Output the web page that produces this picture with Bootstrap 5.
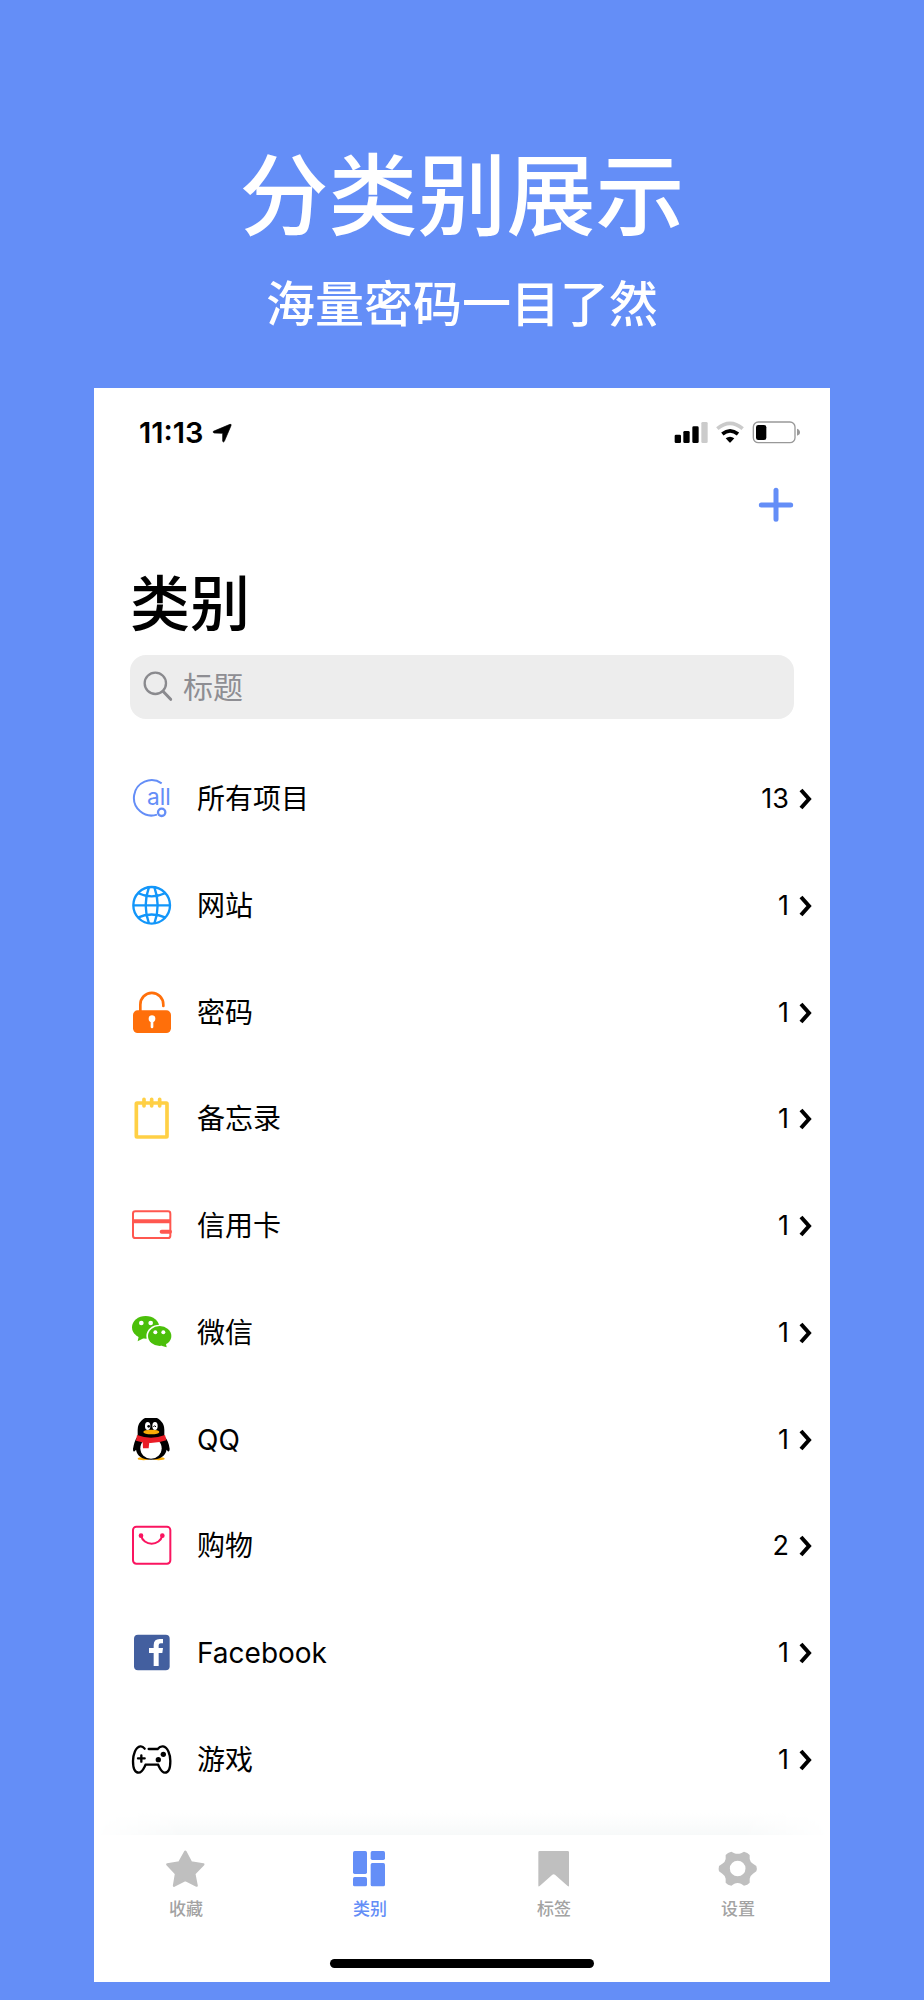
<!DOCTYPE html>
<html lang="zh-CN">
<head>
<meta charset="utf-8">
<meta name="viewport" content="width=device-width, initial-scale=1">
<title>分类别展示</title>
<link href="https://cdn.jsdelivr.net/npm/bootstrap@5.3.0/dist/css/bootstrap.min.css" rel="stylesheet">
<style>
  :root { --brand: #648ef7; --muted-icon: #bfbfbf; }
  body {
    background: var(--brand);
    color: #000;
    font-family: Inter, "Noto Sans CJK SC", sans-serif;
  }
  svg { display: block; flex: none; }
  .promo { padding: 144px 0 53px; }
  .promo-title { font-size: 89px; line-height: 104px; font-weight: 500; }
  .promo-sub { font-size: 49px; line-height: 60px; font-weight: 500; margin-top: 27px; }
  .phone { width: 80%; padding: 0; margin-bottom: 18px; max-width: 736px; }
  .status { padding: 29px 29px 0 45px; height: 61px; }
  .status-time { font-size: 29px; line-height: 32px; font-weight: 600; }
  .add-row { padding: 38px 36px 0; }
  .page-title { font-size: 60px; line-height: 72px; font-weight: 500; margin: 45px 36px 0; }
  .search { background: #ededed; border-radius: 16px; height: 64px; margin: 15px 36px 0; padding: 0 12px; gap: 9px; }
  .search input, .search input:focus { background: none; border: 0; box-shadow: none; padding: 0; font-size: 30px; line-height: 40px; }
  .search input::placeholder { color: #8e8e93; opacity: 1; }
  .categories { margin-top: 27px; }
  .category { padding: 0 18px 0 35px; font-size: 28px; line-height: 40px; color: #000; gap: 24px; }
  .category-count { gap: 7px; font-size: 27px; }
  .fade-strip {
    height: 22px;
    background: linear-gradient(#fff, #f7f9f9);
    -webkit-mask-image: linear-gradient(90deg, transparent, #000 12%, #000 88%, transparent);
    mask-image: linear-gradient(90deg, transparent, #000 12%, #000 88%, transparent);
  }
  .tab { flex: 1 1 0; padding: 14px 0 0; color: #a3a3a3; font-size: 17px; line-height: 24px; gap: 8px; font-weight: 500; }
  .tab svg { fill: var(--muted-icon); }
  .tab.active { color: var(--brand); }
  .tab.active svg { fill: var(--brand); }
  .home-bar { width: 36%; height: 9px; background: #000; margin: 38px auto 14px; }
</style>
</head>
<body>
<div class="d-flex flex-column align-items-center min-vh-100">
  <header class="promo text-center text-white">
    <h1 class="promo-title mb-0">分类别展示</h1>
    <p class="promo-sub mb-0">海量密码一目了然</p>
  </header>

  <main class="phone bg-white d-flex flex-column flex-grow-1">
    <div class="status d-flex justify-content-between align-items-center">
      <div class="d-flex align-items-center gap-2">
        <span class="status-time">11:13</span>
        <svg width="20" height="20" viewBox="366 128 60 60" aria-hidden="true"><path d="M370 153 420 132Q425 131 423 136L403 183Q400 187 398 183V159L372 158Q368 156 370 153Z" stroke="#000" stroke-width="2"/></svg>
      </div>
      <svg width="127" height="28" viewBox="102 117 381 84" aria-hidden="true">
        <rect x="104" y="164" width="19" height="25" rx="4"/><rect x="130" y="153" width="19" height="36" rx="4"/>
        <rect x="157" y="139" width="19" height="50" rx="4"/><rect x="184" y="126" width="19" height="63" rx="4" fill="#cbcbcb"/>
        <path d="M232 146Q270 114 308 146" fill="none" stroke="#cbcbcb" stroke-width="11"/>
        <path d="M247 162Q270 143 294 162" fill="none" stroke="#000" stroke-width="11"/>
        <path d="M257 175Q270 165 283 175L272 187Q270 189 268 187Z"/>
        <rect x="340" y="126" width="125" height="62" rx="15" fill="none" stroke="#999" stroke-width="4"/>
        <rect x="348" y="135" width="31" height="45" rx="7"/><path d="M471 146Q480 149 480 157T471 167Z" fill="#999"/>
      </svg>
    </div>

    <div class="add-row d-flex justify-content-end">
      <button type="button" class="btn border-0 p-0" aria-label="添加">
        <svg width="36" height="36" viewBox="354 321 108 108"><path d="M408 331V418M364 375H452" fill="none" stroke="#648ef7" stroke-width="15" stroke-linecap="round"/></svg>
      </button>
    </div>

    <h2 class="page-title">类别</h2>
    <label class="search d-flex align-items-center">
      <svg width="32" height="32" viewBox="156 871 96 96" fill="none" stroke="#8a8a8e" aria-hidden="true"><circle cx="196" cy="908" r="32" stroke-width="7"/><path d="M219 932 242 956" stroke-width="9" stroke-linecap="round"/></svg>
      <input type="search" class="form-control" placeholder="标题" aria-label="标题">
    </label>

    <nav class="categories d-flex flex-column flex-grow-1" aria-label="类别">
      <a href="#" class="category d-flex flex-fill align-items-center text-decoration-none">
        <svg width="44" height="44" viewBox="27 52 132 132" fill="none" stroke="#648ef7"><path d="M125 71A53 53 0 1 0 111 165" stroke-width="6"/><circle cx="125" cy="158" r="11" stroke-width="7"/><text x="81" y="135" font-family="Inter, sans-serif" font-size="68" fill="#648ef7" stroke="none">all</text></svg>
        <span class="flex-grow-1">所有项目</span>
        <span class="category-count d-flex align-items-center">13 <svg width="16" height="24" viewBox="0 0 16 24"><path d="M5 3 13 12 5 21" fill="none" stroke="#000" stroke-width="4"/></svg></span>
      </a>
      <a href="#" class="category d-flex flex-fill align-items-center text-decoration-none">
        <svg width="44" height="44" viewBox="27 372 132 132" fill="none" stroke="#1296fa" stroke-width="7"><circle cx="95" cy="436" r="55"/><path d="M39 436H151M87 381Q67 436 87 491M103 381Q123 436 103 491M53 399Q95 419 137 399M53 473Q95 454 137 473"/></svg>
        <span class="flex-grow-1">网站</span>
        <span class="category-count d-flex align-items-center">1 <svg width="16" height="24" viewBox="0 0 16 24"><path d="M5 3 13 12 5 21" fill="none" stroke="#000" stroke-width="4"/></svg></span>
      </a>
      <a href="#" class="category d-flex flex-fill align-items-center text-decoration-none">
        <svg width="44" height="44" viewBox="27 692 132 132"><path d="M61 754V733A34 35 0 0 1 130 733V737" fill="none" stroke="#ff6f0a" stroke-width="8" stroke-linecap="round"/><rect x="39" y="750" width="114" height="68" rx="14" fill="#ff6f0a"/><circle cx="96" cy="775" r="10" fill="#fff"/><path d="M96 778V800" stroke="#fff" stroke-width="8" stroke-linecap="round"/></svg>
        <span class="flex-grow-1">密码</span>
        <span class="category-count d-flex align-items-center">1 <svg width="16" height="24" viewBox="0 0 16 24"><path d="M5 3 13 12 5 21" fill="none" stroke="#000" stroke-width="4"/></svg></span>
      </a>
      <a href="#" class="category d-flex flex-fill align-items-center text-decoration-none">
        <svg width="44" height="44" viewBox="27 52 132 132" fill="none" stroke="#ffd045" stroke-linecap="round"><rect x="49" y="70" width="92" height="102" rx="2" stroke-width="11"/><path d="M72 59V79M95 59V79M119 59V79" stroke-width="11"/></svg>
        <span class="flex-grow-1">备忘录</span>
        <span class="category-count d-flex align-items-center">1 <svg width="16" height="24" viewBox="0 0 16 24"><path d="M5 3 13 12 5 21" fill="none" stroke="#000" stroke-width="4"/></svg></span>
      </a>
      <a href="#" class="category d-flex flex-fill align-items-center text-decoration-none">
        <svg width="44" height="44" viewBox="27 372 132 132" fill="none" stroke="#ff574f"><rect x="39" y="394" width="112" height="80" rx="7" stroke-width="6"/><path d="M39 424H151" stroke-width="12"/><path d="M125 455H150" stroke-width="12" stroke-linecap="round"/></svg>
        <span class="flex-grow-1">信用卡</span>
        <span class="category-count d-flex align-items-center">1 <svg width="16" height="24" viewBox="0 0 16 24"><path d="M5 3 13 12 5 21" fill="none" stroke="#000" stroke-width="4"/></svg></span>
      </a>
      <a href="#" class="category d-flex flex-fill align-items-center text-decoration-none">
        <svg width="44" height="44" viewBox="27 693 132 132" fill="#4bbf0a"><ellipse cx="77" cy="742" rx="41" ry="34"/><path d="M57 765 53 784 72 774Z"/><ellipse cx="119" cy="768" rx="40" ry="34" fill="#fff"/><ellipse cx="119" cy="768" rx="35" ry="30"/><path d="M124 797 140 802 137 787Z"/><g fill="#fff"><circle cx="64" cy="729" r="7"/><circle cx="92" cy="729" r="7"/><circle cx="106" cy="757" r="6"/><circle cx="130" cy="757" r="6"/></g></svg>
        <span class="flex-grow-1">微信</span>
        <span class="category-count d-flex align-items-center">1 <svg width="16" height="24" viewBox="0 0 16 24"><path d="M5 3 13 12 5 21" fill="none" stroke="#000" stroke-width="4"/></svg></span>
      </a>
      <a href="#" class="category d-flex flex-fill align-items-center text-decoration-none">
        <svg width="44" height="44" viewBox="27 83 132 132"><ellipse cx="71" cy="205" rx="18" ry="5" fill="#faab07"/><ellipse cx="116" cy="205" rx="18" ry="5" fill="#faab07"/><path d="M53 138V118A40 39 0 0 1 133 118V138Q146 152 149 176Q148 190 140 178Q134 207 93 208Q53 207 48 178Q39 190 39 176Q43 151 53 138Z"/><ellipse cx="93" cy="174" rx="32" ry="31" fill="#fff"/><path d="M51 134Q93 150 135 134L139 150Q93 166 48 151Z" fill="#ea1c26"/><path d="M68 152 88 155 86 174H69Z" fill="#ea1c26"/><ellipse cx="83" cy="107" rx="8" ry="12" fill="#fff"/><ellipse cx="105" cy="107" rx="8" ry="12" fill="#fff"/><circle cx="86" cy="108" r="4"/><path d="M100 110Q104 102 108 110" fill="none" stroke="#000" stroke-width="3"/><ellipse cx="94" cy="125" rx="24" ry="7" fill="#faab07"/></svg>
        <span class="flex-grow-1">QQ</span>
        <span class="category-count d-flex align-items-center">1 <svg width="16" height="24" viewBox="0 0 16 24"><path d="M5 3 13 12 5 21" fill="none" stroke="#000" stroke-width="4"/></svg></span>
      </a>
      <a href="#" class="category d-flex flex-fill align-items-center text-decoration-none">
        <svg width="44" height="44" viewBox="27 403 132 132" fill="none" stroke="#fa1560" stroke-width="6"><rect x="39" y="411" width="112" height="111" rx="10"/><path d="M63 438A33 32 0 0 0 127 438"/><g fill="#fa1560" stroke="none"><circle cx="63" cy="438" r="7"/><circle cx="127" cy="438" r="7"/></g></svg>
        <span class="flex-grow-1">购物</span>
        <span class="category-count d-flex align-items-center">2 <svg width="16" height="24" viewBox="0 0 16 24"><path d="M5 3 13 12 5 21" fill="none" stroke="#000" stroke-width="4"/></svg></span>
      </a>
      <a href="#" class="category d-flex flex-fill align-items-center text-decoration-none">
        <svg width="44" height="44" viewBox="27 723 132 132"><rect x="42" y="734" width="107" height="107" rx="12" fill="#435f9f"/><path d="M101 828V789H87V774H101V766Q101 747 119 747H129V760H122Q116 760 116 766V774H129L127 789H116V828Z" fill="#fff"/></svg>
        <span class="flex-grow-1">Facebook</span>
        <span class="category-count d-flex align-items-center">1 <svg width="16" height="24" viewBox="0 0 16 24"><path d="M5 3 13 12 5 21" fill="none" stroke="#000" stroke-width="4"/></svg></span>
      </a>
      <a href="#" class="category d-flex flex-fill align-items-center text-decoration-none">
        <svg width="44" height="44" viewBox="27 1043 132 132"><path d="M86 1076H113Q120 1067 129 1068C143 1070 151 1092 151 1112C151 1133 146 1147 135 1147C124 1147 120 1134 114 1123H77C71 1134 67 1147 56 1147C44 1147 39 1133 39 1112C39 1092 47 1070 61 1068Q68 1067 74 1075" fill="none" stroke="#000" stroke-width="7" stroke-linecap="round"/><path d="M64 1095V1114M54 1104H74" stroke="#000" stroke-width="7" stroke-linecap="round"/><circle cx="130" cy="1092" r="8"/><circle cx="115" cy="1108" r="8"/></svg>
        <span class="flex-grow-1">游戏</span>
        <span class="category-count d-flex align-items-center">1 <svg width="16" height="24" viewBox="0 0 16 24"><path d="M5 3 13 12 5 21" fill="none" stroke="#000" stroke-width="4"/></svg></span>
      </a>
    </nav>

    <div class="fade-strip"></div>
    <nav class="d-flex" aria-label="标签栏">
      <a href="#" class="tab d-flex flex-column align-items-center text-decoration-none">
        <svg width="40" height="40" viewBox="228 87 120 120"><path d="M286 95 303 127 340 133 313 161 320 197 286 180 252 197 258 161 232 133 268 127Z" stroke="#bfbfbf" stroke-width="7" stroke-linejoin="round"/></svg>
        收藏
      </a>
      <a href="#" class="tab active d-flex flex-column align-items-center text-decoration-none" aria-current="page">
        <svg width="40" height="40" viewBox="780 87 120 120"><rect x="789" y="93" width="42" height="69" rx="5"/><rect x="842" y="93" width="43" height="27" rx="5"/><rect x="789" y="171" width="42" height="28" rx="5"/><rect x="842" y="129" width="43" height="70" rx="5"/></svg>
        类别
      </a>
      <a href="#" class="tab d-flex flex-column align-items-center text-decoration-none">
        <svg width="40" height="40" viewBox="222 87 120 120"><path d="M239 93H323Q327 93 327 97V197Q327 201 323 198L285 164Q281 161 277 164L239 198Q235 201 235 197V97Q235 93 239 93Z"/></svg>
        标签
      </a>
      <a href="#" class="tab d-flex flex-column align-items-center text-decoration-none">
        <svg width="40" height="40" viewBox="774 87 120 120"><path fill-rule="evenodd" d="M814 95 823 100Q833 103 843 100L852 95Q863 97 869 105V117Q871 128 879 131L889 138Q892 146 889 154L879 161Q871 166 869 176V188Q863 195 852 197L843 191Q833 187 823 191L814 197Q803 195 797 188V176Q795 166 787 161L777 154Q775 146 777 138L787 131Q795 128 797 117V105Q803 97 814 95ZM833 122A23 23 0 1 0 833 169A23 23 0 1 0 833 122Z"/></svg>
        设置
      </a>
    </nav>
    <div class="home-bar rounded-pill"></div>
  </main>
</div>
<script src="https://cdn.jsdelivr.net/npm/bootstrap@5.3.0/dist/js/bootstrap.bundle.min.js"></script>
</body>
</html>
